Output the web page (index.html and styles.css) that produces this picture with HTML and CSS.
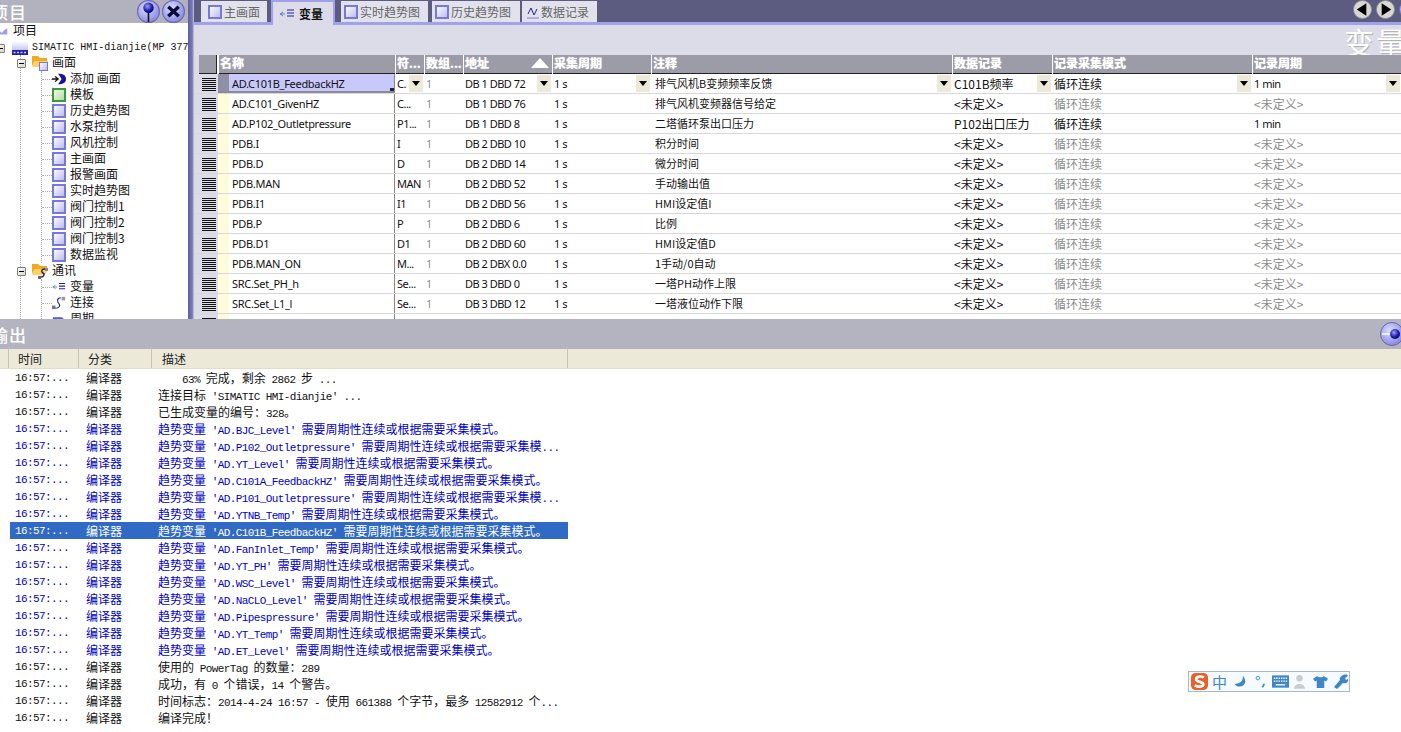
FILE: index.html
```html
<!DOCTYPE html>
<html lang="zh">
<head>
<meta charset="utf-8">
<title>WinCC flexible</title>
<link rel="stylesheet" href="styles.css">
</head>
<body>
<svg class="defs" width="0" height="0" aria-hidden="true">
  <defs>
    <linearGradient id="gs" x1="0" y1="0" x2="1" y2="1"><stop offset="0" stop-color="#ffffff"/><stop offset="1" stop-color="#b8b8ec"/></linearGradient>
    <linearGradient id="gg" x1="0" y1="0" x2="1" y2="1"><stop offset="0" stop-color="#f4fff0"/><stop offset="1" stop-color="#b0d8a0"/></linearGradient>
    <linearGradient id="gd" x1="0" y1="0" x2="0" y2="1"><stop offset="0" stop-color="#ffffff"/><stop offset="1" stop-color="#c8c8f0"/></linearGradient>
    <radialGradient id="gb" cx=".4" cy=".35" r=".7"><stop offset="0" stop-color="#dcdcff"/><stop offset="1" stop-color="#8484e0"/></radialGradient>
    <radialGradient id="gk" cx=".4" cy=".35" r=".7"><stop offset="0" stop-color="#a0a0ff"/><stop offset=".6" stop-color="#2020b0"/><stop offset="1" stop-color="#000060"/></radialGradient>
    <symbol id="screen" viewBox="0 0 14 14"><rect x="1" y="1" width="12" height="12" fill="url(#gs)" stroke="#7878d8" stroke-width="2"/></symbol>
    <symbol id="tpl" viewBox="0 0 14 14"><rect x="1" y="1" width="12" height="12" fill="url(#gg)" stroke="#3c9a3c" stroke-width="2"/></symbol>
    <symbol id="tag" viewBox="0 0 16 12"><path d="M1 6h5M1 6l3-2M1 6l3 2" fill="none" stroke="#6080c0"/><path d="M8 2h7M8 5h7M8 8h7" stroke="#2020a0" stroke-width="1.2"/></symbol>
    <symbol id="sel" viewBox="0 0 14 14"><path d="M0 1.5h14M0 3.5h14M0 5.5h14M0 7.5h14M0 9.5h14M0 11.5h14M0 13.5h14" stroke="#111" stroke-width="1"/></symbol>
  </defs>
</svg>

<main class="app">
  <section class="top">
    <aside class="project">
      <header class="ptitle">
        <span class="bigtitle">项目</span>
        <span class="round">
          <svg viewBox="0 0 22 22"><circle cx="11" cy="11" r="10.5" fill="url(#gb)" stroke="#6868b0"/><path d="M11 11v10" stroke="#111" stroke-width="1.5"/><circle cx="11" cy="7.5" r="5" fill="url(#gk)"/></svg>
          <svg viewBox="0 0 22 22"><circle cx="11" cy="11" r="10.5" fill="url(#gb)" stroke="#6868b0"/><path d="M6 6.5l10 9M16 6.5l-10 9" stroke="#0a0a3c" stroke-width="3.4"/></svg>
        </span>
      </header>
      <div class="tree">
        <div class="node n0">
          <svg class="ic" viewBox="0 0 16 12"><path d="M0 11l4-5 3 3 3-4 5-3v9z" fill="#a0a0e0"/></svg>
          <span class="cjk">项目</span>
        </div>
        <div class="node n1">
          <span class="box"></span>
          <svg class="ic-device" viewBox="0 0 16 14"><rect y="0" width="16" height="9" fill="url(#gd)"/><rect y="9" width="16" height="5" fill="#2222a8"/><path d="M1.500 11.500h2M5 11.500h2M8.500 11.500h2M12 11.500h2" stroke="#d0d0ff" stroke-width="1.600"/></svg>
          <span class="mono">SIMATIC HMI-dianjie(MP 377</span>
        </div>
        <div class="group">
          <div class="node n2">
            <span class="box"></span>
            <svg class="ic-folder" viewBox="0 0 17 16"><path d="M0 1h6l2 2h7v3H3L0 11z" fill="#f4a820"/><path d="M3 6h13l-3 6H0z" fill="#ffd060"/><rect x="7.500" y="7.500" width="8" height="8" fill="url(#gs)" stroke="#7878d8"/></svg>
            <span class="cjk">画面</span>
          </div>
          <div class="kids">
            <div class="leaf"><svg class="ic" viewBox="0 0 16 14"><path d="M0 7h7M3.500 4l3.500 3-3.500 3" fill="none" stroke="#111" stroke-width="1.500"/><path d="M7 1c6 0 9 2 9 6s-3 6-9 6l4-6z" fill="#1414a0"/></svg><span class="cjk">添加 画面</span></div>
            <div class="leaf"><svg class="ic"><use href="#tpl"/></svg><span class="cjk">模板</span></div>
            <div class="leaf"><svg class="ic"><use href="#screen"/></svg><span class="cjk">历史趋势图</span></div>
            <div class="leaf"><svg class="ic"><use href="#screen"/></svg><span class="cjk">水泵控制</span></div>
            <div class="leaf"><svg class="ic"><use href="#screen"/></svg><span class="cjk">风机控制</span></div>
            <div class="leaf"><svg class="ic"><use href="#screen"/></svg><span class="cjk">主画面</span></div>
            <div class="leaf"><svg class="ic"><use href="#screen"/></svg><span class="cjk">报警画面</span></div>
            <div class="leaf"><svg class="ic"><use href="#screen"/></svg><span class="cjk">实时趋势图</span></div>
            <div class="leaf"><svg class="ic"><use href="#screen"/></svg><span class="cjk">阀门控制1</span></div>
            <div class="leaf"><svg class="ic"><use href="#screen"/></svg><span class="cjk">阀门控制2</span></div>
            <div class="leaf"><svg class="ic"><use href="#screen"/></svg><span class="cjk">阀门控制3</span></div>
            <div class="leaf"><svg class="ic"><use href="#screen"/></svg><span class="cjk">数据监视</span></div>
          </div>
          <div class="node n2">
            <span class="box"></span>
            <svg class="ic-folder" viewBox="0 0 17 16"><path d="M0 1h6l2 2h7v3H3L0 11z" fill="#f4a820"/><path d="M3 6h13l-3 6H0z" fill="#ffd060"/><rect x="13" y="5" width="3" height="3" fill="#888"/><rect x="6" y="13" width="3" height="3" fill="#666"/><path d="M13 6c-4 0-4 3-2 4s1 4-2 4" fill="none" stroke="#20208c" stroke-width="1.400"/></svg>
            <span class="cjk">通讯</span>
          </div>
          <div class="kids">
            <div class="leaf"><svg class="ic"><use href="#tag"/></svg><span class="cjk">变量</span></div>
            <div class="leaf"><svg class="ic" viewBox="0 0 16 16"><rect y="11" width="4" height="4" fill="#777"/><rect x="11" y="1" width="4" height="4" fill="#999"/><path d="M10 2c-5 0-4 5-2 7s0 5-4 5" fill="none" stroke="#2020a0" stroke-width="1.300"/></svg><span class="cjk">连接</span></div>
            <div class="leaf"><svg class="ic" viewBox="0 0 16 14"><path d="M1 6h10l3 3" fill="none" stroke="#5a5ac8" stroke-width="2"/></svg><span class="cjk">周期</span></div>
          </div>
        </div>
      </div>
    </aside>

    <div class="splitter"></div>

    <div class="editor">
      <nav class="tabs">
        <div class="tab t1"><svg class="tab-ic"><use href="#screen"/></svg>主画面</div>
        <div class="tab t2 active"><svg class="tab-tag"><use href="#tag"/></svg>变量</div>
        <div class="tab t3"><svg class="tab-ic"><use href="#screen"/></svg>实时趋势图</div>
        <div class="tab t4"><svg class="tab-ic"><use href="#screen"/></svg>历史趋势图</div>
        <div class="tab t5"><svg class="tab-log" viewBox="0 0 12 14"><path d="M1 9l3-6 3 7 3-6" fill="none" stroke="#2020a0"/><path d="M0 13h12" stroke="#8080d0"/></svg>数据记录</div>
        <div class="navs">
          <svg viewBox="0 0 20 20"><circle cx="10" cy="10" r="9.500" fill="#d8d8d0" stroke="#8c8c9c"/><path d="M14 3.500v13L4 10z" fill="#000"/></svg>
          <svg viewBox="0 0 20 20"><circle cx="10" cy="10" r="9.500" fill="#d8d8d0" stroke="#8c8c9c"/><path d="M6 3.500v13L16 10z" fill="#000"/></svg>
          <svg viewBox="0 0 20 20"><circle cx="10" cy="10" r="9.500" fill="url(#gb)" stroke="#6868b0"/></svg>
        </div>
      </nav>
      <div class="band"></div>
      <div class="caption"><span class="watermark">变量</span></div>

      <div class="grid">
        <div class="row head">
          <div class="corner"></div>
          <div class="hc">名称</div>
          <div class="hc">符...</div>
          <div class="hc">数组...</div>
          <div class="hc sorted">地址<i class="sort"></i></div>
          <div class="hc">采集周期</div>
          <div class="hc">注释</div>
          <div class="hc">数据记录</div>
          <div class="hc">记录采集模式</div>
          <div class="hc">记录周期</div>
        </div>

        <div class="row current">
          <div class="rs"><svg><use href="#sel"/></svg></div>
          <div class="name sel-name"><span class="mark"></span>AD.C101B_FeedbackHZ</div>
          <div class="c sym">C.<i class="dd"></i></div><div class="c dim">1</div>
          <div class="c">DB 1 DBD 72<i class="dd"></i></div><div class="c">1 s<i class="dd"></i></div>
          <div class="c note">排气风机B变频频率反馈<i class="dd"></i></div>
          <div class="c cn">C101B频率<i class="dd"></i></div><div class="c cn">循环连续<i class="dd"></i></div><div class="c">1 min<i class="dd"></i></div>
        </div>
        <div class="row">
          <div class="rs"><svg><use href="#sel"/></svg></div><div class="name"><span class="mark"></span>AD.C101_GivenHZ</div>
          <div class="c sym">C...</div><div class="c dim">1</div><div class="c">DB 1 DBD 76</div><div class="c">1 s</div>
          <div class="c note">排气风机变频器信号给定</div><div class="c cn">&lt;未定义&gt;</div><div class="c cn dim">循环连续</div><div class="c cn dim">&lt;未定义&gt;</div>
        </div>
        <div class="row">
          <div class="rs"><svg><use href="#sel"/></svg></div><div class="name"><span class="mark"></span>AD.P102_Outletpressure</div>
          <div class="c sym">P1...</div><div class="c dim">1</div><div class="c">DB 1 DBD 8</div><div class="c">1 s</div>
          <div class="c note">二塔循环泵出口压力</div><div class="c cn">P102出口压力</div><div class="c cn">循环连续</div><div class="c">1 min</div>
        </div>
        <div class="row">
          <div class="rs"><svg><use href="#sel"/></svg></div><div class="name"><span class="mark"></span>PDB.I</div>
          <div class="c sym">I</div><div class="c dim">1</div><div class="c">DB 2 DBD 10</div><div class="c">1 s</div>
          <div class="c note">积分时间</div><div class="c cn">&lt;未定义&gt;</div><div class="c cn dim">循环连续</div><div class="c cn dim">&lt;未定义&gt;</div>
        </div>
        <div class="row">
          <div class="rs"><svg><use href="#sel"/></svg></div><div class="name"><span class="mark"></span>PDB.D</div>
          <div class="c sym">D</div><div class="c dim">1</div><div class="c">DB 2 DBD 14</div><div class="c">1 s</div>
          <div class="c note">微分时间</div><div class="c cn">&lt;未定义&gt;</div><div class="c cn dim">循环连续</div><div class="c cn dim">&lt;未定义&gt;</div>
        </div>
        <div class="row">
          <div class="rs"><svg><use href="#sel"/></svg></div><div class="name"><span class="mark"></span>PDB.MAN</div>
          <div class="c sym">MAN</div><div class="c dim">1</div><div class="c">DB 2 DBD 52</div><div class="c">1 s</div>
          <div class="c note">手动输出值</div><div class="c cn">&lt;未定义&gt;</div><div class="c cn dim">循环连续</div><div class="c cn dim">&lt;未定义&gt;</div>
        </div>
        <div class="row">
          <div class="rs"><svg><use href="#sel"/></svg></div><div class="name"><span class="mark"></span>PDB.I1</div>
          <div class="c sym">I1</div><div class="c dim">1</div><div class="c">DB 2 DBD 56</div><div class="c">1 s</div>
          <div class="c note">HMI设定值I</div><div class="c cn">&lt;未定义&gt;</div><div class="c cn dim">循环连续</div><div class="c cn dim">&lt;未定义&gt;</div>
        </div>
        <div class="row">
          <div class="rs"><svg><use href="#sel"/></svg></div><div class="name"><span class="mark"></span>PDB.P</div>
          <div class="c sym">P</div><div class="c dim">1</div><div class="c">DB 2 DBD 6</div><div class="c">1 s</div>
          <div class="c note">比例</div><div class="c cn">&lt;未定义&gt;</div><div class="c cn dim">循环连续</div><div class="c cn dim">&lt;未定义&gt;</div>
        </div>
        <div class="row">
          <div class="rs"><svg><use href="#sel"/></svg></div><div class="name"><span class="mark"></span>PDB.D1</div>
          <div class="c sym">D1</div><div class="c dim">1</div><div class="c">DB 2 DBD 60</div><div class="c">1 s</div>
          <div class="c note">HMI设定值D</div><div class="c cn">&lt;未定义&gt;</div><div class="c cn dim">循环连续</div><div class="c cn dim">&lt;未定义&gt;</div>
        </div>
        <div class="row">
          <div class="rs"><svg><use href="#sel"/></svg></div><div class="name"><span class="mark"></span>PDB.MAN_ON</div>
          <div class="c sym">M...</div><div class="c dim">1</div><div class="c">DB 2 DBX 0.0</div><div class="c">1 s</div>
          <div class="c note">1手动/0自动</div><div class="c cn">&lt;未定义&gt;</div><div class="c cn dim">循环连续</div><div class="c cn dim">&lt;未定义&gt;</div>
        </div>
        <div class="row">
          <div class="rs"><svg><use href="#sel"/></svg></div><div class="name"><span class="mark"></span>SRC.Set_PH_h</div>
          <div class="c sym">Se...</div><div class="c dim">1</div><div class="c">DB 3 DBD 0</div><div class="c">1 s</div>
          <div class="c note">一塔PH动作上限</div><div class="c cn">&lt;未定义&gt;</div><div class="c cn dim">循环连续</div><div class="c cn dim">&lt;未定义&gt;</div>
        </div>
        <div class="row">
          <div class="rs"><svg><use href="#sel"/></svg></div><div class="name"><span class="mark"></span>SRC.Set_L1_l</div>
          <div class="c sym">Se...</div><div class="c dim">1</div><div class="c">DB 3 DBD 12</div><div class="c">1 s</div>
          <div class="c note">一塔液位动作下限</div><div class="c cn">&lt;未定义&gt;</div><div class="c cn dim">循环连续</div><div class="c cn dim">&lt;未定义&gt;</div>
        </div>
        <div class="row">
          <div class="rs"><svg><use href="#sel"/></svg></div><div class="name"><span class="mark"></span></div>
        </div>
      </div>
    </div>
  </section>

  <section class="output">
    <header class="otitle">
      <span class="bigtitle">输出</span>
      <svg class="opin" viewBox="0 0 22 24"><circle cx="12" cy="12" r="11.500" fill="url(#gb)" stroke="#6868b0"/><path d="M2 12h10" stroke="#fff" stroke-width="1.500"/><circle cx="15" cy="12" r="5" fill="url(#gk)"/></svg>
    </header>
    <div class="ohead">
      <div class="oh o-time">时间</div>
      <div class="oh o-cat">分类</div>
      <div class="oh o-desc">描述</div>
      <div class="oh o-rest"></div>
    </div>
    <div class="log">
      <div class="lr"><span class="lt">16:57:...</span><span class="lc">编译器</span><span class="ld"><b>&nbsp;&nbsp;&nbsp;&nbsp;63%</b> 完成，剩余 <b>2862</b> 步 <b>...</b></span></div>
      <div class="lr"><span class="lt">16:57:...</span><span class="lc">编译器</span><span class="ld">连接目标 <b>'SIMATIC HMI-dianjie'</b> <b>...</b></span></div>
      <div class="lr"><span class="lt">16:57:...</span><span class="lc">编译器</span><span class="ld">已生成变量的编号：<b>328</b>。</span></div>
      <div class="lr warn"><span class="lt">16:57:...</span><span class="lc">编译器</span><span class="ld">趋势变量 <b>'AD.BJC_Level'</b> 需要周期性连续或根据需要采集模式。</span></div>
      <div class="lr warn"><span class="lt">16:57:...</span><span class="lc">编译器</span><span class="ld">趋势变量 <b>'AD.P102_Outletpressure'</b> 需要周期性连续或根据需要采集模<b>...</b></span></div>
      <div class="lr warn"><span class="lt">16:57:...</span><span class="lc">编译器</span><span class="ld">趋势变量 <b>'AD.YT_Level'</b> 需要周期性连续或根据需要采集模式。</span></div>
      <div class="lr warn"><span class="lt">16:57:...</span><span class="lc">编译器</span><span class="ld">趋势变量 <b>'AD.C101A_FeedbackHZ'</b> 需要周期性连续或根据需要采集模式。</span></div>
      <div class="lr warn"><span class="lt">16:57:...</span><span class="lc">编译器</span><span class="ld">趋势变量 <b>'AD.P101_Outletpressure'</b> 需要周期性连续或根据需要采集模<b>...</b></span></div>
      <div class="lr warn"><span class="lt">16:57:...</span><span class="lc">编译器</span><span class="ld">趋势变量 <b>'AD.YTNB_Temp'</b> 需要周期性连续或根据需要采集模式。</span></div>
      <div class="lr selected"><span class="lt">16:57:...</span><span class="lc">编译器</span><span class="ld">趋势变量 <b>'AD.C101B_FeedbackHZ'</b> 需要周期性连续或根据需要采集模式。</span></div>
      <div class="lr warn"><span class="lt">16:57:...</span><span class="lc">编译器</span><span class="ld">趋势变量 <b>'AD.FanInlet_Temp'</b> 需要周期性连续或根据需要采集模式。</span></div>
      <div class="lr warn"><span class="lt">16:57:...</span><span class="lc">编译器</span><span class="ld">趋势变量 <b>'AD.YT_PH'</b> 需要周期性连续或根据需要采集模式。</span></div>
      <div class="lr warn"><span class="lt">16:57:...</span><span class="lc">编译器</span><span class="ld">趋势变量 <b>'AD.WSC_Level'</b> 需要周期性连续或根据需要采集模式。</span></div>
      <div class="lr warn"><span class="lt">16:57:...</span><span class="lc">编译器</span><span class="ld">趋势变量 <b>'AD.NaCLO_Level'</b> 需要周期性连续或根据需要采集模式。</span></div>
      <div class="lr warn"><span class="lt">16:57:...</span><span class="lc">编译器</span><span class="ld">趋势变量 <b>'AD.Pipespressure'</b> 需要周期性连续或根据需要采集模式。</span></div>
      <div class="lr warn"><span class="lt">16:57:...</span><span class="lc">编译器</span><span class="ld">趋势变量 <b>'AD.YT_Temp'</b> 需要周期性连续或根据需要采集模式。</span></div>
      <div class="lr warn"><span class="lt">16:57:...</span><span class="lc">编译器</span><span class="ld">趋势变量 <b>'AD.ET_Level'</b> 需要周期性连续或根据需要采集模式。</span></div>
      <div class="lr"><span class="lt">16:57:...</span><span class="lc">编译器</span><span class="ld">使用的 <b>PowerTag</b> 的数量：<b>289</b></span></div>
      <div class="lr"><span class="lt">16:57:...</span><span class="lc">编译器</span><span class="ld">成功，有 <b>0</b> 个错误，<b>14</b> 个警告。</span></div>
      <div class="lr"><span class="lt">16:57:...</span><span class="lc">编译器</span><span class="ld">时间标志：<b>2014-4-24 16:57 -</b> 使用 <b>661388</b> 个字节，最多 <b>12582912</b> 个<b>...</b></span></div>
      <div class="lr"><span class="lt">16:57:...</span><span class="lc">编译器</span><span class="ld">编译完成！</span></div>
    </div>
  </section>

  <div class="ime">
    <svg class="i-logo" viewBox="0 0 20 20"><rect x="1" y="1" width="18" height="18" rx="5" fill="#e8602c"/><path d="M14.500 6c-1.500-1.800-8-1.800-8 1.500S14 10 14 13s-6.500 3-9 1" fill="none" stroke="#fff" stroke-width="2.800"/></svg>
    <span class="ime-zh">中</span>
    <svg class="i-moon" viewBox="0 0 16 16"><path d="M12 1c1 6-3 10-10 10 3 5 12 4 13-2 .5-3-1-6-3-8z" fill="#3f86c8"/></svg>
    <svg class="i-dot" viewBox="0 0 12 16"><circle cx="3" cy="3.500" r="2" fill="none" stroke="#3f86c8"/><path d="M10 10c0 2-1 3-2 4" stroke="#3f86c8" stroke-width="2" fill="none"/></svg>
    <svg class="i-kbd" viewBox="0 0 18 14"><rect width="18" height="13" fill="#3f86c8"/><path d="M2 3h14M2 6h14" stroke="#fff" stroke-width="1.400" stroke-dasharray="1.500 1"/><path d="M4 10h10" stroke="#fff" stroke-width="1.400"/></svg>
    <svg class="i-user" viewBox="0 0 12 16"><circle cx="6" cy="4.500" r="3.500" fill="#ccc"/><path d="M0 16c0-7 12-7 12 0z" fill="#ccc"/></svg>
    <svg class="i-shirt" viewBox="0 0 16 16"><path d="M4.500 2L0 5l2 3 2-1v8h8V7l2 1 2-3-4.500-3c-1 2-6 2-7 0z" fill="#3f86c8"/></svg>
    <svg class="i-wrench" viewBox="0 0 16 16"><path d="M10 1c3-1 5 0 5 1l-3 2 1 2 2-1c1 3-2 5-5 4l-6 6-3-2 6-7c-1-2 1-4 3-5z" fill="#3f86c8"/></svg>
  </div>
</main>
</body>
</html>
```

FILE: styles.css
```css
* { box-sizing: border-box; }
html, body { margin: 0; padding: 0; height: 100%; overflow: hidden; background: #fff; }
body { font-family: "Noto Sans CJK SC", sans-serif; font-size: 12px; color: #111; }
.defs { position: absolute; }
i { font-style: normal; }

.app { position: relative; width: 1401px; height: 732px; overflow: hidden; display: flex; flex-direction: column; }
.top { height: 319px; display: flex; overflow: hidden; flex: none; }

/* project tree */
.project { width: 188px; flex: none; background: #fff; overflow: hidden; }
.ptitle { height: 23px; background: #b2b2be; display: flex; align-items: center; justify-content: space-between; padding-right: 3px; overflow: hidden; }
.bigtitle { font-size: 17px; font-weight: 500; color: #fff; margin-left: -9px; letter-spacing: 1px; line-height: 1; }
.round { display: flex; gap: 2px; }
.round svg { width: 23px; height: 23px; }
.tree { position: relative; font-size: 12px; }
.node { display: flex; align-items: center; position: relative; white-space: nowrap; }
.n0 { height: 16px; }
.n0 .ic { width: 11px; height: 12px; margin-left: -3px; margin-right: 6px; }
.n1 { height: 15px; margin-top: 1px; padding-left: 12px; }
.n1 .box { position: absolute; left: -4px; top: 4px; }
.ic-device { width: 16px; height: 14px; margin-right: 4px; flex: none; }
.mono { font-family: "Liberation Mono", monospace; font-size: 10px; letter-spacing: .02px; }
.box { width: 9px; height: 9px; border: 1px solid #808080; border-radius: 1px; background: linear-gradient(135deg, #fff, #d8d4c4); position: relative; flex: none; }
.box::after { content: ""; position: absolute; left: 1px; right: 1px; top: 3px; height: 1px; background: #000; }
.group { position: relative; margin-left: 20px; border-left: 1px dotted #aaa; }
.n2 { height: 16px; margin-left: -4px; }
.n2 .box { margin-right: 6px; }
.ic-folder { width: 17px; height: 16px; margin-right: 4px; flex: none; }
.kids { position: relative; margin-left: 20px; border-left: 1px dotted #aaa; }
.leaf { height: 16px; display: flex; align-items: center; padding-left: 10px; position: relative; white-space: nowrap; }
.leaf::before { content: ""; position: absolute; left: 0; width: 10px; top: 8px; border-top: 1px dotted #aaa; }
.ic { width: 14px; height: 14px; flex: none; margin-right: 5px; }
.cjk { line-height: 16px; margin-left: -1px; margin-bottom: 2px; }

/* splitter */
.splitter { width: 6px; flex: none; background: linear-gradient(90deg, #5f5fa0, #7a7ab8 70%, #c8c8e0); }

/* editor */
.editor { flex: 1; min-width: 0; display: flex; flex-direction: column; background: #dcdce8; overflow: hidden; }
.tabs { height: 22px; flex: none; background: #5c5c80; display: flex; align-items: flex-end; position: relative; padding-left: 7px; }
.tab { height: 21px; background: #e2e2ec; color: #666; font-size: 12px; display: flex; align-items: center; white-space: nowrap; }
.t1 { width: 66px; margin-right: 4px; padding-left: 4px; }
.t2 { width: 64px; margin-right: 6px; }
.t3 { width: 87px; margin-right: 4px; }
.t4 { width: 88px; margin-right: 2px; }
.t5 { width: 75px; }
.tab.active { height: 25px; background: #dcdce8; color: #111; font-weight: 700; margin-bottom: -3px; border: 2px solid #a0a0ec; border-bottom: 0; padding-left: 2px; z-index: 1; align-self: flex-end; }
.tab-ic { width: 14px; height: 14px; margin: 0 2px 0 3px; flex: none; }
.tab-tag { width: 16px; height: 12px; margin: 0 4px 0 4px; flex: none; }
.tab-log { width: 12px; height: 14px; margin: 0 2px 0 5px; flex: none; }
.navs { position: absolute; right: -17px; top: 0; display: flex; gap: 4px; }
.navs svg { width: 19px; height: 19px; }
.band { height: 3px; flex: none; background: #a0a0ec; }
.caption { height: 30px; flex: none; position: relative; overflow: hidden; display: flex; justify-content: flex-end; }
.watermark { font-size: 30px; line-height: 32px; color: #fff; text-shadow: 1px 1px 0 #b4b4b4; letter-spacing: 2px; margin-right: -7px; white-space: nowrap; }

.grid { padding-left: 2px; background: #dcdce8; flex: 1; }
.row { display: grid; grid-template-columns: 22px 177px 29px 39px 89px 99px 301px 100px 200px 149px; height: 20px; background: #fff; border-bottom: 1px solid #d8d8d8; font-family: "Noto Sans", sans-serif; font-size: 11px; letter-spacing: -.3px; }
.row.head { height: 19px; background: #fff; border-bottom: 0; font-family: "Noto Sans CJK SC", sans-serif; font-weight: 700; color: #fff; font-size: 12px; letter-spacing: 0; }
.corner { background: #9c9ca8; margin-left: 3px; margin-right: 1px; border-bottom: 1px solid #222; border-right: 1px solid #222; box-shadow: -3px 0 0 #dcdce8; }
.hc { background: #9c9ca8; margin-left: 1px; border-bottom: 1px solid #222; padding-left: 1px; line-height: 16px; position: relative; overflow: hidden; white-space: nowrap; text-shadow: 0 0 1px #fff; }
.sort { position: absolute; right: 3px; top: 3px; width: 0; height: 0; border-left: 9px solid transparent; border-right: 9px solid transparent; border-bottom: 10px solid #fff; }
.rs { background: #dcdce8; display: flex; align-items: center; justify-content: center; padding-left: 3px; }
.rs svg { width: 14px; height: 14px; }
.name { padding-left: 14px; line-height: 19px; position: relative; white-space: nowrap; overflow: hidden; border-right: 1px solid #888; }
.mark { position: absolute; left: 0; top: 0; bottom: 0; width: 11px; background: #fdfddc; }
.sel-name { background: #c8c8fa; border-bottom: 2px solid #8c8c98; }
.sel-name .mark { background: #9090a4; }
.sel-name::after { content: ""; position: absolute; right: 0; bottom: 0; width: 4px; height: 3px; background: #222238; }
.c { padding-left: 2px; line-height: 19px; position: relative; white-space: nowrap; overflow: hidden; letter-spacing: -.5px; }
.note { padding-left: 4px; font-family: "Noto Sans CJK SC", sans-serif; font-size: 11px; letter-spacing: 0; }
.cn { font-family: "Noto Sans CJK SC", sans-serif; font-size: 12px; letter-spacing: 0; }
.dim { color: #8c8c8c; }
.dd { position: absolute; right: 1px; top: 1px; width: 14px; height: 17px; background: #ece9d8; }
.dd::after { content: ""; position: absolute; left: 3px; top: 6px; border-left: 4px solid transparent; border-right: 4px solid transparent; border-top: 5px solid #000; }

/* output */
.output { flex: 1; min-height: 0; display: flex; flex-direction: column; background: #fff; }
.otitle { height: 30px; flex: none; background: #b4b4c0; display: flex; align-items: center; justify-content: space-between; overflow: hidden; }
.opin { width: 22px; height: 24px; margin-right: -1px; }
.ohead { height: 20px; flex: none; display: flex; background: #ece9d8; border-bottom: 1px solid #e0ddc8; color: #222; font-size: 12px; line-height: 20px; padding-left: 8px; }
.oh { border-left: 1px solid #c8c4b0; padding-left: 9px; }
.o-time { width: 70px; }
.o-cat { width: 73px; }
.o-desc { width: 416px; padding-left: 10px; }
.o-rest { flex: 1; }
.lr { height: 17px; line-height: 17px; display: flex; white-space: nowrap; margin-left: 10px; width: 558px; font-size: 12px; color: #111; }
.lr b, .lt { font-family: "Liberation Mono", monospace; font-size: 11px; letter-spacing: -.6px; font-weight: 400; }
.lt { width: 76px; padding-left: 5px; line-height: 19px; }
.lc { width: 72px; }
.ld { flex: 1; word-spacing: 3px; }
.lr b { word-spacing: 0; }
.warn .lt, .warn .lc, .warn .ld { color: #0000c8; }
.selected { background: #316ac5; }
.selected .lt, .selected .lc, .selected .ld { color: #fff; }

/* input method bar */
.ime { position: absolute; left: 1188px; top: 671px; width: 162px; height: 21px; border: 1px solid #a8b8c8; background: #f6fbff; display: flex; align-items: center; padding-left: 1px; }
.ime svg { flex: none; }
.i-logo { width: 19px; height: 19px; }
.ime-zh { font-size: 15px; color: #3f86c8; line-height: 17px; width: 16px; margin-left: 3px; }
.i-moon { width: 13px; height: 13px; margin-left: 5px; }
.i-dot { width: 11px; height: 14px; margin-left: 9px; }
.i-kbd { width: 17px; height: 14px; margin-left: 6px; }
.i-user { width: 11px; height: 15px; margin-left: 5px; }
.i-shirt { width: 17px; height: 15px; margin-left: 7px; }
.i-wrench { width: 16px; height: 16px; margin-left: 4px; }
```
